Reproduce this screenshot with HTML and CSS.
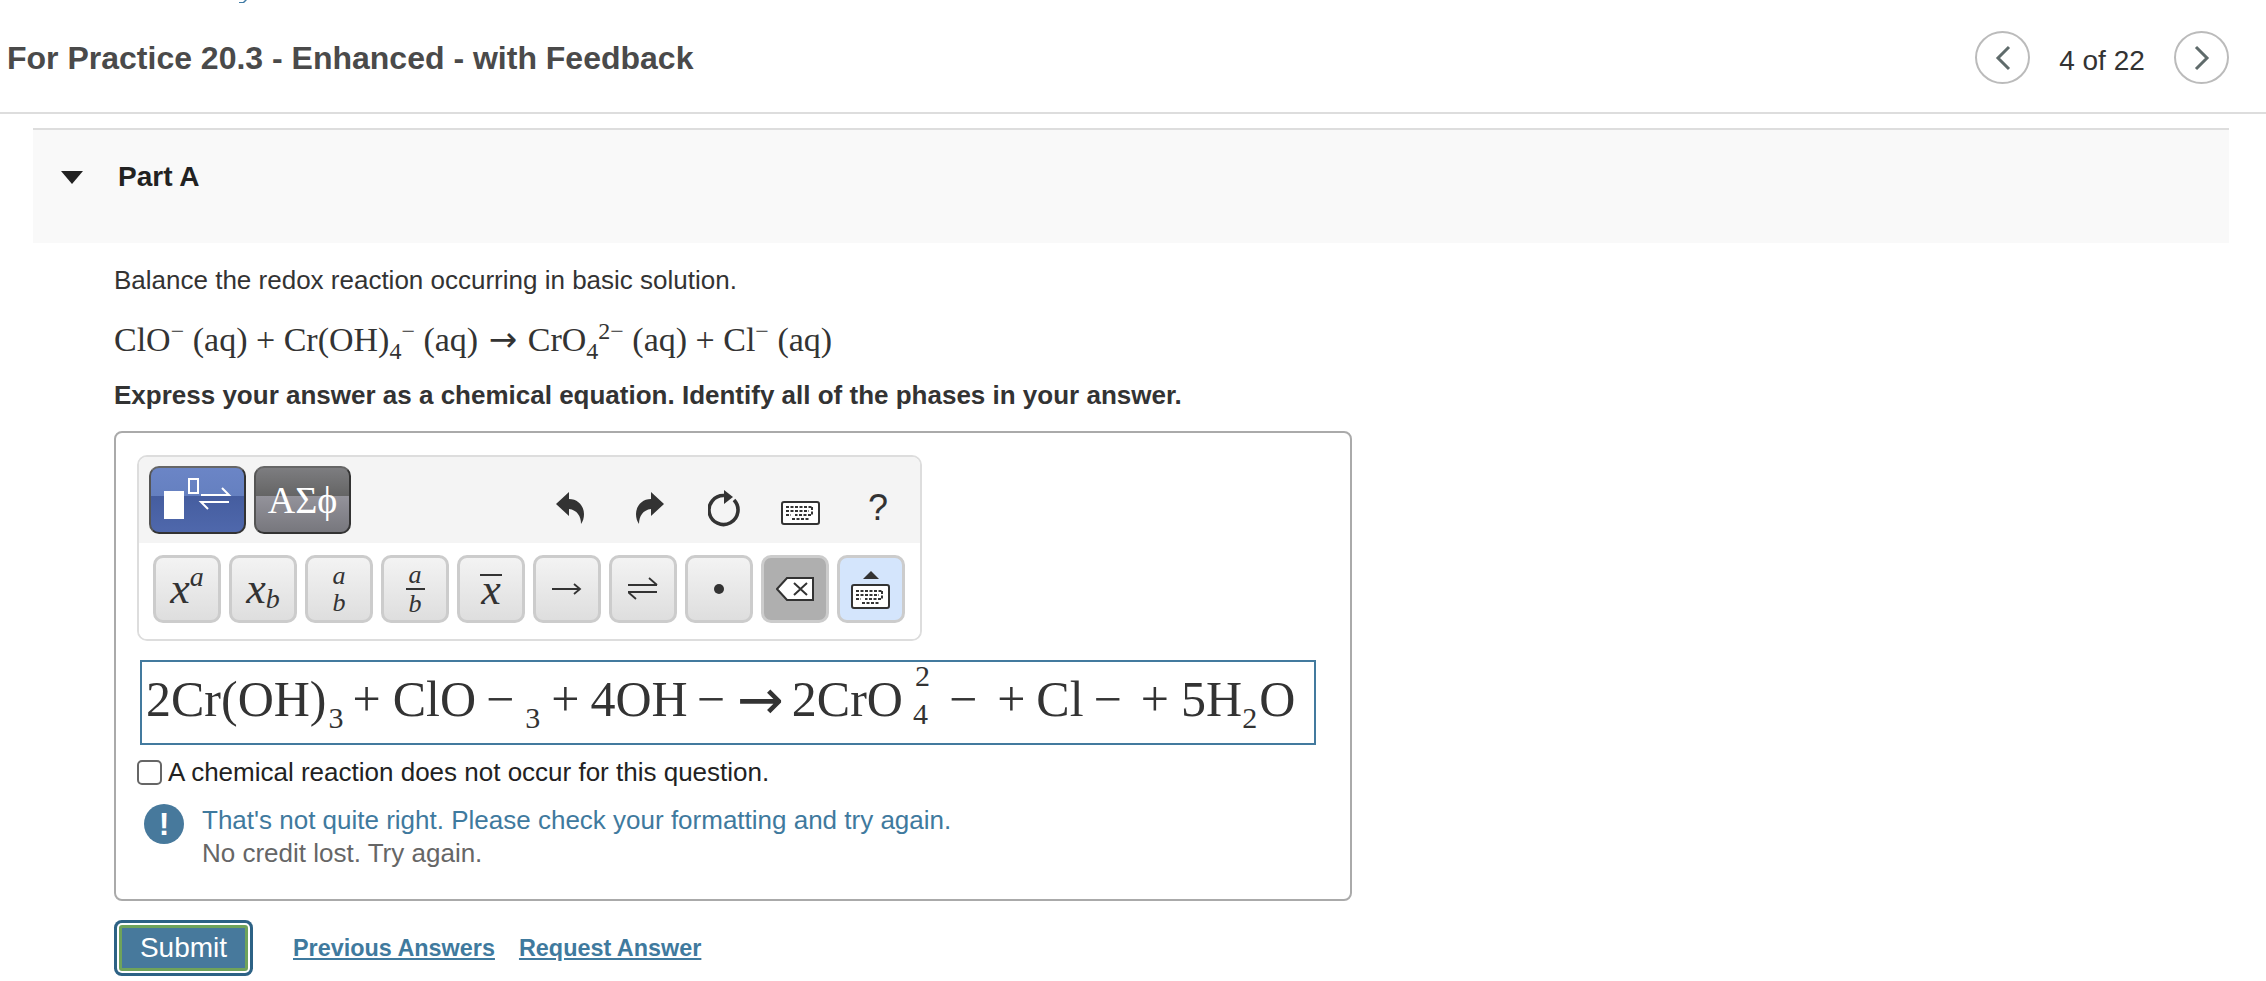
FILE: index.html
```html
<!DOCTYPE html>
<html lang="en">
<head>
    <meta charset="UTF-8">
    <meta name="viewport" content="width=device-width, initial-scale=1.0">
    <title>For Practice 20.3 - Enhanced - with Feedback</title>
    <link rel="stylesheet" href="styles.css">
</head>
<body>

    <!-- bottom of the cut off link above the title -->
    <div class="crumb">
        <svg width="8" height="3" viewBox="0 0 8 3"><path d="M0 2 H4 L6 0 H8 L5 3 H0 Z" fill="#3f7ba5"/></svg>
    </div>

    <div class="item-header">
        <h1>For Practice 20.3 - Enhanced - with Feedback</h1>
        <div class="pager">
            <button class="round">
                <svg width="18" height="26" viewBox="0 0 18 26"><path d="M15 2 L4 13 L15 24" fill="none" stroke="#5f6b6b" stroke-width="3"/></svg>
            </button>
            <span class="count">4 of 22</span>
            <button class="round">
                <svg width="18" height="26" viewBox="0 0 18 26"><path d="M3 2 L14 13 L3 24" fill="none" stroke="#5f6b6b" stroke-width="3"/></svg>
            </button>
        </div>
    </div>

    <div class="part-head">
        <svg class="caret" width="22" height="13" viewBox="0 0 22 13"><path d="M0 0 H22 L11 13 Z" fill="#222"/></svg>
        <span>Part A</span>
    </div>

    <div class="part-body">
        <p class="prompt">Balance the redox reaction occurring in basic solution.</p>
        <p class="reaction">ClO<sup>−</sup> (aq) + Cr(OH)<sub>4</sub><sup>−</sup> (aq) <span class="rx-arrow">→</span> CrO<sub>4</sub><sup>2−</sup> (aq) + Cl<sup>−</sup> (aq)</p>
        <p class="instr">Express your answer as a chemical equation. Identify all of the phases in your answer.</p>

        <div class="answer-box">
            <div class="toolbar">
                <div class="toolbar-top">
                    <button class="tab tab-blue">
                        <svg width="93" height="64" viewBox="0 0 93 64">
                            <rect x="13" y="23" width="20" height="28" fill="#fff"/>
                            <rect x="38" y="11" width="9" height="14" fill="none" stroke="#fff" stroke-width="2"/>
                            <path d="M50 27 H78 L71 20" fill="none" stroke="#fff" stroke-width="2"/>
                            <path d="M78 34 H50 L57 41" fill="none" stroke="#fff" stroke-width="2"/>
                        </svg>
                    </button>
                    <button class="tab tab-grey">ΑΣϕ</button>
                    <div class="tools">
                        <svg class="undo" width="28" height="32" viewBox="0 0 28 32"><path d="M0 12 L13 0 V7 C22 7 28 14 28 22 C28 26 27 29 25 32 C25 24 21 18 13 17 V24 Z" fill="#333"/></svg>
                        <svg class="redo" width="28" height="32" viewBox="0 0 28 32"><path d="M28 12 L15 0 V7 C6 7 0 14 0 22 C0 26 1 29 3 32 C3 24 7 18 15 17 V24 Z" fill="#333"/></svg>
                        <svg class="reload" width="34" height="38" viewBox="0 0 34 38"><path d="M26 10 A14.500 14.500 0 1 1 16 5.500" fill="none" stroke="#333" stroke-width="3.600"/><path d="M16 0 L25 7 L16 14 Z" fill="#333"/></svg>
                        <svg class="kbd" width="39" height="24" viewBox="0 0 39 24">
                            <rect x="1" y="1" width="37" height="22" rx="2" fill="#fff" stroke="#333" stroke-width="2"/>
                            <path d="M5 6 H31 M5 10 H28 M5 14 H10 M31 6 V14 H14 M11 18 H28" fill="none" stroke="#333" stroke-width="2" stroke-dasharray="3 1.500"/>
                        </svg>
                        <span class="help">?</span>
                    </div>
                </div>
                <div class="toolbar-keys">
                    <button class="key"><i class="big">x</i><sup class="mini"><i>a</i></sup></button>
                    <button class="key"><i class="big">x</i><sub class="mini"><i>b</i></sub></button>
                    <button class="key stack"><i>a</i><i>b</i></button>
                    <button class="key stack frac"><i>a</i><i>b</i></button>
                    <button class="key"><i class="big over">x</i></button>
                    <button class="key">
                        <svg width="30" height="14" viewBox="0 0 30 14"><path d="M0 7 H28 M22 2 L28 7 L22 12" fill="none" stroke="#333" stroke-width="1.800"/></svg>
                    </button>
                    <button class="key">
                        <svg width="30" height="24" viewBox="0 0 30 24"><path d="M0 8 H29 M21 1 L29 8 M0 15 H29 M0 15 L8 22" fill="none" stroke="#333" stroke-width="1.800"/></svg>
                    </button>
                    <button class="key"><span class="dot"></span></button>
                    <button class="key key-del">
                        <svg width="38" height="24" viewBox="0 0 38 24"><path d="M37 1 H11 L1 12 L11 23 H37 Z" fill="#fff" stroke="#333" stroke-width="2"/><path d="M18 6 L31 18 M31 6 L18 18" stroke="#333" stroke-width="2"/></svg>
                    </button>
                    <button class="key key-kbd">
                        <svg width="40" height="42" viewBox="0 0 40 42">
                            <path d="M12 11 L20 3 L28 11 Z" fill="#333"/>
                            <rect x="1" y="17" width="37" height="23" rx="2" fill="#fff" stroke="#333" stroke-width="2"/>
                            <path d="M5 23 H31 M5 27 H28 M5 31 H10 M31 23 V31 H14 M11 35 H28" fill="none" stroke="#333" stroke-width="2" stroke-dasharray="3 1.500"/>
                        </svg>
                    </button>
                </div>
            </div>

            <div class="math-field">
                <span>2Cr(OH)</span><span class="low g2">3</span><span class="g9">+</span><span class="g12">ClO</span><span class="g10">−</span><span class="low g11">3</span><span class="g11">+</span><span class="g11">4OH</span><span class="g9">−</span><span class="arrow g12">→</span><span class="g8">2CrO</span><span class="pair g10"><span>2</span><span>4</span></span><span class="g19">−</span><span class="g20">+</span><span class="g11">Cl</span><span class="g10">−</span><span class="g19">+</span><span class="g12">5H</span><span class="low">2</span><span class="g2">O</span>
            </div>

            <label class="no-reaction"><span class="check"></span>A chemical reaction does not occur for this question.</label>

            <div class="feedback">
                <span class="bang">!</span>
                <div>
                    <div class="fb-main">That's not quite right. Please check your formatting and try again.</div>
                    <div class="fb-sub">No credit lost. Try again.</div>
                </div>
            </div>
        </div>

        <div class="actions">
            <button class="submit">Submit</button>
            <a href="#">Previous Answers</a>
            <a href="#">Request Answer</a>
        </div>
    </div>

</body>
</html>
```

FILE: styles.css
```css
html, body { margin: 0; height: 981px; overflow: hidden; background: #fff; }
body { font-family: "Liberation Sans", Arial, sans-serif; color: #333; }
button { font-family: inherit; padding: 0; cursor: pointer; }
p { margin: 0; }

.crumb { height: 3px; overflow: hidden; padding-left: 239px; }
.crumb svg { display: block; }

.item-header { height: 107px; padding: 2px 37px 0 7px; display: flex; align-items: center; justify-content: space-between; border-bottom: 2px solid #ddd; }
.item-header h1 { margin: 0; font-size: 32px; font-weight: bold; color: #4a4a4a; }
.pager { display: flex; align-items: center; margin-top: -2px; }
.round { width: 55px; height: 53px; border: 2px solid #bbb; border-radius: 50%; background: #fff; display: flex; align-items: center; justify-content: center; }
.count { width: 144px; text-align: center; font-size: 28px; padding-top: 7px; }

.part-head { margin: 14px 37px 0 33px; height: 113px; border-top: 2px solid #ddd; background: #f9f9f9; display: flex; align-items: flex-start; }
.part-head span { font-size: 28px; font-weight: bold; color: #222; margin-left: 35px; margin-top: 31px; }
.part-head .caret { margin: 41px 0 0 28px; }

.part-body { padding-left: 114px; }
.prompt { font-size: 26px; line-height: 30px; margin-top: 22px; }
.reaction { font-family: "Liberation Serif", serif; font-size: 34px; line-height: 40px; margin-top: 25px; }
.reaction sup, .reaction sub { font-size: 24px; line-height: 0; }
.rx-arrow { font-family: "DejaVu Sans", sans-serif; line-height: 0; margin: 0 2px; }
.instr { font-size: 26px; font-weight: bold; line-height: 30px; margin-top: 20px; }

.answer-box { width: 1238px; height: 470px; margin-top: 21px; border: 2px solid #aaa; border-radius: 8px; padding: 22px 0 0 21px; box-sizing: border-box; }

.toolbar { width: 785px; height: 186px; box-sizing: border-box; border: 2px solid #ddd; border-radius: 10px; overflow: hidden; }
.toolbar-top { height: 86px; background: #f4f4f4; display: flex; align-items: flex-start; gap: 8px; padding: 9px 32px 0 10px; box-sizing: border-box; }
.tab { width: 97px; height: 68px; border: 2px solid #333; border-top-color: #666; border-left-color: #555; border-radius: 10px; display: flex; align-items: center; justify-content: center; color: #fff; }
.tab-blue { background: linear-gradient(#6b85c6 0, #6580c0 43%, #455d9f 43%, #4f68ac 100%); }
.tab-grey { background: linear-gradient(#7d7d80 0, #656565 43%, #94939b 43%, #77777d 100%); font-family: "Liberation Serif", serif; font-size: 38px; }
.tools { margin-left: auto; display: flex; align-items: flex-start; }
.undo { margin-top: 26px; }
.redo { margin: 26px 0 0 52px; }
.reload { margin: 24px 0 0 44px; }
.kbd { margin: 35px 0 0 39px; }
.help { margin: 24px 0 0 48px; font-size: 36px; line-height: 36px; }

.toolbar-keys { height: 96px; display: flex; gap: 8px; padding: 12px 0 0 14px; box-sizing: border-box; background: #fff; }
.key { width: 68px; height: 68px; box-sizing: border-box; border: 3px solid #ccc; border-radius: 10px; background: linear-gradient(#f3f3f3, #dedede); display: flex; align-items: center; justify-content: center; font-family: "Liberation Serif", serif; color: #333; }
.key .big { font-size: 44px; line-height: 42px; }
.key .mini { font-size: 28px; line-height: 0; }
.key sup.mini { position: relative; top: -12px; }
.key sub.mini { position: relative; top: 10px; }
.stack { flex-direction: column; font-size: 26px; line-height: 27px; }
.frac i:first-child { border-bottom: 2px solid #333; padding: 0 3px; }
.over { border-top: 2px solid #333; line-height: 28px !important; padding: 0 1px; }
.dot { width: 10px; height: 10px; border-radius: 50%; background: #333; }
.key-del { background: #afafaf; }
.key-kbd { background: #d4e5fc; }

.math-field { width: 1176px; height: 85px; box-sizing: border-box; margin: 19px 0 0 3px; border: 2px solid #437a9e; display: flex; align-items: baseline; padding: 2px 0 0 4px; font-family: "Liberation Serif", serif; font-size: 50px; line-height: 66px; color: #333; }
.low { font-size: 30px; position: relative; top: 12px; }
.arrow { font-family: "DejaVu Sans", sans-serif; font-size: 56px; position: relative; top: 3px; }
.pair { display: inline-flex; flex-direction: column; font-size: 30px; line-height: 38px; align-self: flex-start; margin-top: -7px; }
.pair span:first-child { margin-left: 2px; }
.g2 { margin-left: 2px; }
.g8 { margin-left: 8px; }
.g9 { margin-left: 9px; }
.g10 { margin-left: 10px; }
.g11 { margin-left: 11px; }
.g12 { margin-left: 12px; }
.g19 { margin-left: 19px; }
.g20 { margin-left: 20px; }

.no-reaction { display: flex; align-items: center; gap: 6px; margin: 12px 0 0 0; font-size: 26px; line-height: 30px; color: #222; }
.check { width: 25px; height: 25px; box-sizing: border-box; border: 2px solid #666; border-radius: 5px; background: #fff; }

.feedback { display: flex; gap: 18px; margin: 17px 0 0 7px; font-size: 26px; }
.bang { width: 40px; height: 40px; flex: none; border-radius: 50%; background: #47799c; color: #fff; font-weight: bold; font-size: 32px; line-height: 40px; text-align: center; }
.fb-main { color: #3f7a9e; line-height: 33px; }
.fb-sub { color: #666; line-height: 33px; }

.actions { display: flex; align-items: center; margin-top: 19px; }
.submit { width: 129px; height: 46px; margin: 5px; border: 3px solid #6fa35a; border-radius: 3px; background: #47799c; color: #fff; font-size: 28px; box-shadow: 0 0 0 2px #fff, 0 0 0 5px #2d6285; box-sizing: border-box; }
.actions a { font-size: 23.400px; font-weight: bold; color: #3f7a9e; margin-left: 24px; }
.actions .submit + a { margin-left: 40px; }
```
